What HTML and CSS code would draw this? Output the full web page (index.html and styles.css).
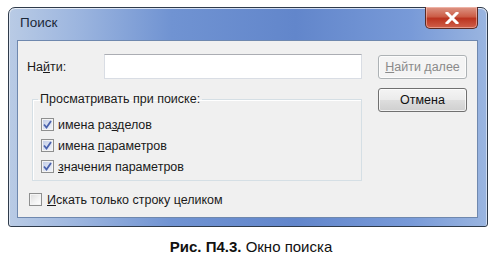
FILE: index.html
```html
<!DOCTYPE html>
<html lang="ru">
<head>
    <meta charset="UTF-8">
    <title>Поиск</title>
    <link rel="stylesheet" href="styles.css">
</head>
<body>
    <div class="window">
        <div class="title-bar">
            <span class="title">Поиск</span>
            <span class="close-btn">
                <svg width="14" height="12" viewBox="0 0 14 12">
                    <path d="M2 1 L12 11 M12 1 L2 11" stroke="#ffffff" stroke-width="3" stroke-linecap="square"/>
                </svg>
            </span>
        </div>
        <div class="client">
            <div class="main">
                <div class="find-row">
                    <label class="find-label">На<u>й</u>ти:</label>
                    <div class="find-input"></div>
                </div>
                <fieldset class="group">
                    <legend>Просматривать при поиске:</legend>
                    <div class="check-row">
                        <span class="checkbox checked">
                            <svg width="9" height="9" viewBox="0 0 9 9"><path d="M1 4.5 L3.5 7.5 L8 1" stroke="#4a62ad" stroke-width="1.8" fill="none"/></svg>
                        </span>
                        <span>имена ра<u>з</u>делов</span>
                    </div>
                    <div class="check-row">
                        <span class="checkbox checked">
                            <svg width="9" height="9" viewBox="0 0 9 9"><path d="M1 4.5 L3.5 7.5 L8 1" stroke="#4a62ad" stroke-width="1.8" fill="none"/></svg>
                        </span>
                        <span>имена <u>п</u>араметров</span>
                    </div>
                    <div class="check-row">
                        <span class="checkbox checked">
                            <svg width="9" height="9" viewBox="0 0 9 9"><path d="M1 4.5 L3.5 7.5 L8 1" stroke="#4a62ad" stroke-width="1.8" fill="none"/></svg>
                        </span>
                        <span><u>з</u>начения параметров</span>
                    </div>
                </fieldset>
                <div class="check-row whole">
                    <span class="checkbox"></span>
                    <span><u>И</u>скать только строку целиком</span>
                </div>
            </div>
            <div class="buttons">
                <span class="btn disabled"><u>Н</u>айти далее</span>
                <span class="btn">Отмена</span>
            </div>
        </div>
    </div>
    <p class="caption"><b>Рис. П4.3.</b> Окно поиска</p>
</body>
</html>
```

FILE: styles.css
```css
* {
    box-sizing: border-box;
}

body {
    margin: 0;
    background: #ffffff;
    font-family: "Liberation Sans", Arial, sans-serif;
    font-size: 12.5px;
    color: #1a1a1a;
}

.window {
    width: 480px;
    height: 220px;
    margin: 7px 0 0 8px;
    padding: 0 9px 8px 8px;
    display: flex;
    flex-direction: column;
    border: 1px solid #2f3b4b;
    border-radius: 7px 7px 3px 3px;
    background: linear-gradient(to right, #b9cbe5 0%, #9db6df 14%, #7093d2 34%, #6286cb 60%, #789ad8 84%, #9ab5e0 100%);
    box-shadow: inset 0 1px 0 rgba(255, 255, 255, 0.7), inset 1px 0 0 rgba(255, 255, 255, 0.5), inset -1px 0 0 rgba(255, 255, 255, 0.5);
}

.title-bar {
    height: 32px;
    display: flex;
    align-items: flex-start;
}

.title {
    margin: 7px 0 0 3px;
    font-size: 13.5px;
    color: #1b2838;
}

.close-btn {
    margin-left: auto;
    margin-top: -1px;
    width: 53px;
    height: 22px;
    display: flex;
    align-items: center;
    justify-content: center;
    border: 1px solid #5a2a24;
    border-top: none;
    border-radius: 0 0 5px 5px;
    background: linear-gradient(to bottom, #dd9686 0%, #cc5e48 45%, #bb3420 55%, #d0604a 100%);
    box-shadow: inset 0 0 0 1px rgba(255, 210, 200, 0.5);
}

.client {
    flex: 1;
    display: flex;
    padding: 13px 0 0 9px;
    border: 1px solid #6f88ae;
    background: #f0f0f0;
}

.main {
    width: 335px;
    display: flex;
    flex-direction: column;
}

.find-row {
    display: flex;
    align-items: center;
}

.find-label {
    width: 77px;
}

.find-input {
    width: 258px;
    height: 25px;
    background: #ffffff;
    border: 1px solid #d9dde4;
    border-top-color: #abadb3;
}

.group {
    width: 330px;
    margin: 13px 0 0 5px;
    padding: 7px 0 3px 5px;
    border: 1px solid #d5dfe5;
    box-shadow: inset 1px 1px 0 #ffffff;
}

.group legend {
    padding: 0 2px;
    line-height: 15px;
}

.check-row {
    height: 21px;
    display: flex;
    align-items: center;
    gap: 4px;
    padding-left: 3px;
}

.check-row.whole {
    margin-top: 8px;
    padding-left: 2px;
    gap: 5px;
}

.checkbox {
    width: 13px;
    height: 13px;
    display: flex;
    align-items: center;
    justify-content: center;
    border: 1px solid #8e8f8f;
    background: linear-gradient(135deg, #dcdcdc 0%, #f4f4f4 60%, #ffffff 100%);
    box-shadow: inset 0 0 0 1px #f4f4f4;
}

.checkbox.checked {
    background: linear-gradient(135deg, #bfcae6 0%, #dfe5f3 60%, #f4f6fb 100%);
}

.buttons {
    width: 89px;
    margin-left: 16px;
    padding-top: 1px;
    display: flex;
    flex-direction: column;
    gap: 9px;
}

.btn {
    height: 24px;
    display: flex;
    align-items: center;
    justify-content: center;
    border: 1px solid #707070;
    border-radius: 3px;
    background: linear-gradient(to bottom, #f4f4f4 0%, #ebebeb 48%, #dddddd 52%, #cfcfcf 100%);
    box-shadow: inset 0 0 0 1px rgba(255, 255, 255, 0.7);
    color: #111111;
}

.btn.disabled {
    border-color: #adb2b5;
    background: #f4f4f4;
    color: #8a8a8a;
}

.caption {
    margin: 11px 0 0;
    padding-left: 7px;
    text-align: center;
    font-size: 15px;
    line-height: 18px;
    color: #111111;
}
```
